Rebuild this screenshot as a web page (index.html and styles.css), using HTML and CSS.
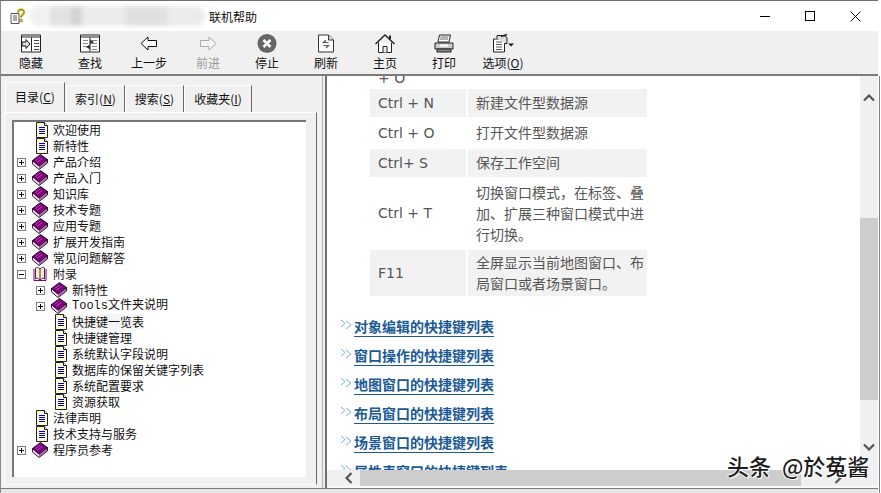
FILE: index.html
```html
<!DOCTYPE html>
<html lang="zh">
<head>
<meta charset="utf-8">
<title>联机帮助</title>
<link rel="stylesheet" href="styles.css">
</head>
<body>
<svg class="defs" width="0" height="0" aria-hidden="true">
  <symbol id="book" viewBox="0 0 16 16">
    <path d="M.5 6.500v3.500l6.500 5.500 8.500-6.500V5.500l-8.500 6.500z" fill="#efe4ef" stroke="#2c102c"/>
    <path d="M.5 6.500 8.500.5l7 5-8.500 6.500z" fill="#800080" stroke="#2c102c"/>
    <path d="M3.500 6.500 8.500 3M5.500 8l5-3.500" stroke="#a848a8"/>
    <path d="M7 12.500v2.500l8-6V6.500z" fill="#800080" opacity=".55"/>
  </symbol>
  <symbol id="doc" viewBox="0 0 12 16">
    <path d="M.5.500h8l3 3v12H.5z" fill="#fffbd8" stroke="#222"/>
    <path d="M8.500.500v3h3" fill="#fff" stroke="#222"/>
    <path d="M3 5.500h6M3 7.500h6M3 9.500h6M3 11.500h6" stroke="#0000c0"/>
  </symbol>
  <symbol id="plus" viewBox="0 0 9 9">
    <rect x=".5" y=".5" width="8" height="8" fill="#fff" stroke="#808080"/>
    <path d="M2 4.500h5M4.500 2v5" stroke="#000"/>
  </symbol>
  <symbol id="minus" viewBox="0 0 9 9">
    <rect x=".5" y=".5" width="8" height="8" fill="#fff" stroke="#808080"/>
    <path d="M2 4.500h5" stroke="#000"/>
  </symbol>
  <symbol id="chev" viewBox="0 0 13 11">
    <path d="M1 1l4 3.500L1 8M6 2l5 4-5 4" fill="none" stroke="#7ab0dc" stroke-width="1"/>
  </symbol>
</svg>

<div class="window">
  <header class="titlebar">
    <svg class="appicon" width="16" height="17" viewBox="0 0 16 17">
      <path d="M1 5.500h8v10H1z" fill="#fff" stroke="#555"/>
      <path d="M3 8h4M3 10h4M3 12h4" stroke="#555"/>
      <path d="M8 4.500c0-4 6-4 6 0 0 2-3 2.500-3 5" fill="none" stroke="#e8d020" stroke-width="2.600"/>
      <path d="M8 4.500c0-4 6-4 6 0 0 2-3 2.500-3 5" fill="none" stroke="#444" stroke-width=".7"/>
      <circle cx="11" cy="12.500" r="1.500" fill="#e8d020" stroke="#444" stroke-width=".5"/>
    </svg>
    <div class="blurred"></div>
    <span class="title">联机帮助</span>
    <div class="controls">
      <svg width="10" height="10" viewBox="0 0 10 10"><path d="M0 5.500h10" stroke="#000"/></svg>
      <svg width="10" height="10" viewBox="0 0 10 10"><rect x=".5" y=".5" width="9" height="9" fill="none" stroke="#000"/></svg>
      <svg width="11" height="11" viewBox="0 0 11 11"><path d="M.5.500l10 10M10.500.500l-10 10" stroke="#000"/></svg>
    </div>
  </header>

  <nav class="toolbar">
    <div class="tool">
      <svg width="22" height="20" viewBox="0 0 22 20"><path d="M1.500 1.500h19v17h-19z" fill="#fff" stroke="#222"/><path d="M1.500 3.500h19M11.500 4v14" stroke="#222"/><path d="M14 7h5M14 10h5M14 13h5M14 16h5" stroke="#444"/><path d="M2 8.500h4V6l4 4.500-4 4.500v-2.500H2z" fill="#ddd" stroke="#111"/></svg>
      <span>隐藏</span>
    </div>
    <div class="tool">
      <svg width="20" height="20" viewBox="0 0 20 20"><path d="M.5 1.500h19v17H.5z" fill="#fff" stroke="#222"/><path d="M.5 3.500h19M10 4v14" stroke="#222"/><path d="M3 7h5M3 10h5M3 13h5M12 7h5M12 10h5M12 13h5M12 16h5" stroke="#888"/><path d="M10 6l4 2.500-4 2.500zM10 11l-4 2.500 4 2.500z" fill="#333"/></svg>
      <span>查找</span>
    </div>
    <div class="tool">
      <svg width="18" height="16" viewBox="0 0 18 16"><path d="M1 8l7-6.500V5h8.500v6H8v3.500z" fill="#fff" stroke="#111"/></svg>
      <span>上一步</span>
    </div>
    <div class="tool off">
      <svg width="18" height="16" viewBox="0 0 18 16"><path d="M17 8l-7-6.500V5H1.500v6H10v3.500z" fill="#f4f4f4" stroke="#aaa"/></svg>
      <span>前进</span>
    </div>
    <div class="tool">
      <svg width="20" height="20" viewBox="0 0 20 20"><circle cx="10" cy="10" r="9.500" fill="#666"/><path d="M6.500 6.500l7 7M13.500 6.500l-7 7" stroke="#fff" stroke-width="2.600"/></svg>
      <span>停止</span>
    </div>
    <div class="tool">
      <svg width="18" height="20" viewBox="0 0 18 20"><path d="M1.500 1.500h10l5 5v12h-15z" fill="#fff" stroke="#333"/><path d="M11.500 1.500v5h5" fill="#ddd" stroke="#333"/><path d="M9 6.500 6.500 9h5M9 14.500 11.500 12h-5" fill="none" stroke="#555" stroke-width="1.200"/></svg>
      <span>刷新</span>
    </div>
    <div class="tool">
      <svg width="20" height="20" viewBox="0 0 20 20"><path d="M.5 10.500 10 1.500l9.500 9" fill="none" stroke="#222" stroke-width="1.400"/><path d="M15 2v4" stroke="#222" stroke-width="2"/><path d="M3.500 9v10h13V9" fill="#fff" stroke="#222"/><path d="M8 19v-6h4v6" fill="#eee" stroke="#222"/></svg>
      <span>主页</span>
    </div>
    <div class="tool">
      <svg width="20" height="20" viewBox="0 0 20 20"><path d="M5.500 1.500h11l-1.500 7H4z" fill="#fff" stroke="#222"/><path d="M6.500 3.500h8M6 5.500h8" stroke="#666"/><path d="M1 9.500h18v6H1z" fill="#ccc" stroke="#222"/><path d="M3 15.500h14v3H3z" fill="#888" stroke="#222"/><path d="M6 12h8" stroke="#fff" stroke-width="2"/></svg>
      <span>打印</span>
    </div>
    <div class="tool">
      <svg width="22" height="20" viewBox="0 0 22 20"><path d="M1.500 5.500h11v13h-11z" fill="#fff" stroke="#222"/><path d="M4 8.500h6M4 11h6M4 13.500h6M4 16h6" stroke="#555"/><path d="M5 5V2h7l3 2v6h-2" fill="#ddd" stroke="#222"/><path d="M9 3l6-2" stroke="#222" stroke-width="1.500"/><path d="M16 10h6l-3 3z" fill="#111"/></svg>
      <span>选项(<u>O</u>)</span>
    </div>
  </nav>

  <main class="main">
    <aside class="side">
      <div class="tabs">
        <div class="tab active">目录(<u>C</u>)</div>
        <div class="tab w1">索引(<u>N</u>)</div>
        <div class="tab w2">搜索(<u>S</u>)</div>
        <div class="tab w3">收藏夹(<u>I</u>)</div>
      </div>
      <div class="pane">
        <div class="tree">
          <div class="row"><i class="slot"></i><svg class="idoc"><use href="#doc"/></svg><span>欢迎使用</span></div>
          <div class="row"><i class="slot"></i><svg class="idoc"><use href="#doc"/></svg><span>新特性</span></div>
          <div class="row"><svg class="exp"><use href="#plus"/></svg><svg class="ibook"><use href="#book"/></svg><span>产品介绍</span></div>
          <div class="row"><svg class="exp"><use href="#plus"/></svg><svg class="ibook"><use href="#book"/></svg><span>产品入门</span></div>
          <div class="row"><svg class="exp"><use href="#plus"/></svg><svg class="ibook"><use href="#book"/></svg><span>知识库</span></div>
          <div class="row"><svg class="exp"><use href="#plus"/></svg><svg class="ibook"><use href="#book"/></svg><span>技术专题</span></div>
          <div class="row"><svg class="exp"><use href="#plus"/></svg><svg class="ibook"><use href="#book"/></svg><span>应用专题</span></div>
          <div class="row"><svg class="exp"><use href="#plus"/></svg><svg class="ibook"><use href="#book"/></svg><span>扩展开发指南</span></div>
          <div class="row"><svg class="exp"><use href="#plus"/></svg><svg class="ibook"><use href="#book"/></svg><span>常见问题解答</span></div>
          <div class="row"><svg class="exp"><use href="#minus"/></svg>
            <svg class="ibook" viewBox="0 0 16 16"><path d="M2 3v11.500h12V3" fill="#fff" stroke="#800080"/><path d="M8 3C6 1 4.500 1 3.500 2v11c1-1 2.500-1 4.500 1 2-2 3.500-2 4.500-1V2c-1-1-2.500-1-4.500 1z" fill="#f4f0c0" stroke="#502060"/><path d="M8 3v11" stroke="#502060"/></svg>
            <span>附录</span></div>
          <div class="row sub"><svg class="exp"><use href="#plus"/></svg><svg class="ibook"><use href="#book"/></svg><span>新特性</span></div>
          <div class="row sub"><svg class="exp"><use href="#plus"/></svg><svg class="ibook"><use href="#book"/></svg><span class="mono">Tools文件夹说明</span></div>
          <div class="row sub"><i class="slot"></i><svg class="idoc"><use href="#doc"/></svg><span class="hover">快捷键一览表</span></div>
          <div class="row sub"><i class="slot"></i><svg class="idoc"><use href="#doc"/></svg><span>快捷键管理</span></div>
          <div class="row sub"><i class="slot"></i><svg class="idoc"><use href="#doc"/></svg><span>系统默认字段说明</span></div>
          <div class="row sub"><i class="slot"></i><svg class="idoc"><use href="#doc"/></svg><span>数据库的保留关键字列表</span></div>
          <div class="row sub"><i class="slot"></i><svg class="idoc"><use href="#doc"/></svg><span>系统配置要求</span></div>
          <div class="row sub"><i class="slot"></i><svg class="idoc"><use href="#doc"/></svg><span>资源获取</span></div>
          <div class="row"><i class="slot"></i><svg class="idoc"><use href="#doc"/></svg><span>法律声明</span></div>
          <div class="row"><i class="slot"></i><svg class="idoc"><use href="#doc"/></svg><span>技术支持与服务</span></div>
          <div class="row"><svg class="exp"><use href="#plus"/></svg><svg class="ibook"><use href="#book"/></svg><span>程序员参考</span></div>
        </div>
      </div>
    </aside>
    <div class="splitter"></div>
    <section class="viewer">
      <div class="doc">
        <div class="clip"><span>+ O</span></div>
        <div class="keys">
          <div class="k shade">Ctrl + N</div><div class="v shade">新建文件型数据源</div>
          <div class="k">Ctrl + O</div><div class="v">打开文件型数据源</div>
          <div class="k shade">Ctrl+ S</div><div class="v shade">保存工作空间</div>
          <div class="k">Ctrl + T</div><div class="v">切换窗口模式，在标签、叠加、扩展三种窗口模式中进行切换。</div>
          <div class="k shade">F11</div><div class="v shade tight">全屏显示当前地图窗口、布局窗口或者场景窗口。</div>
        </div>
        <ul class="links">
          <li><svg class="chev"><use href="#chev"/></svg><a>对象编辑的快捷键列表</a></li>
          <li><svg class="chev"><use href="#chev"/></svg><a>窗口操作的快捷键列表</a></li>
          <li><svg class="chev"><use href="#chev"/></svg><a>地图窗口的快捷键列表</a></li>
          <li><svg class="chev"><use href="#chev"/></svg><a>布局窗口的快捷键列表</a></li>
          <li><svg class="chev"><use href="#chev"/></svg><a>场景窗口的快捷键列表</a></li>
          <li><svg class="chev"><use href="#chev"/></svg><a>属性表窗口的快捷键列表</a></li>
        </ul>
      </div>
      <div class="vbar">
        <svg class="arrow" width="12" height="8" viewBox="0 0 12 8"><path d="M1 6.500l5-5 5 5" fill="none" stroke="#555" stroke-width="2.200"/></svg>
        <div class="vtrack"><div class="vthumb"></div></div>
        <svg class="arrow down" width="12" height="8" viewBox="0 0 12 8"><path d="M1 1.500l5 5 5-5" fill="none" stroke="#555" stroke-width="2.200"/></svg>
      </div>
      <div class="hbar">
        <svg class="arrow" width="8" height="12" viewBox="0 0 8 12"><path d="M6.500 1l-5 5 5 5" fill="none" stroke="#555" stroke-width="2.200"/></svg>
        <div class="hthumb"></div>
        <svg class="arrow" width="8" height="12" viewBox="0 0 8 12"><path d="M1.500 1l5 5-5 5" fill="none" stroke="#555" stroke-width="2.200"/></svg>
      </div>
      <div class="corner"></div>
    </section>
  </main>
  <footer class="foot"></footer>
</div>
<div class="mark">头条 @於菟酱</div>
</body>
</html>
```
FILE: styles.css
```css
* { box-sizing: border-box; }
html, body { margin: 0; height: 100%; overflow: hidden; }
body {
  background: #fff linear-gradient(#808080, #808080) 879px 76px / 1px 417px no-repeat;
  font: 12px "Noto Sans CJK SC", "Liberation Sans", sans-serif;
  color: #111;
}
.defs { position: absolute; }
.window {
  width: 878px;
  height: 493px;
  display: flex;
  flex-direction: column;
  border-top: 1px solid #6e6e6e;
  border-left: 1px solid #8a8a8a;
  background: #f0f0f0;
}
.titlebar {
  height: 30px;
  flex: none;
  display: flex;
  align-items: center;
  background: #fff;
  padding-left: 9px;
}
.appicon { flex: none; margin-top: 1px; }
.blurred {
  width: 177px;
  height: 20px;
  margin-left: 3px;
  border-radius: 10px;
  background: linear-gradient(90deg, #f1f1f1 0 12%, #e2e2e2 12% 24%, #d4d4d4 24% 30%, #ececec 30% 55%, #e0e0e0 55% 78%, #ececec 78% 100%);
  filter: blur(2px);
}
.title { margin-left: 3px; margin-top: 1px; line-height: 16px; }
.controls {
  margin-left: auto;
  display: flex;
  align-items: center;
  gap: 35px;
  padding-right: 17px;
}
.toolbar {
  height: 45px;
  flex: none;
  display: flex;
  padding-left: 0.500px;
  border-bottom: 2px solid #7c7c7c;
}
.tool {
  width: 59px;
  height: 43px;
  display: flex;
  flex-direction: column;
  align-items: center;
}
.tool svg { height: 23px; margin-top: 1px; flex: none; }
.tool span { line-height: 16px; margin-top: 0; }
.off { color: #9a9a9a; }
.main { flex: 1; min-height: 0; display: flex; }
.side { width: 316px; flex: none; padding: 7px 0 3px 2px; display: flex; flex-direction: column; }
.tabs { height: 29px; flex: none; display: flex; align-items: flex-end; }
.tab {
  width: 60px;
  height: 27px;
  line-height: 26px;
  text-align: center;
  border-right: 1px solid #6a6a6a;
  border-left: 1px solid #fff;
  border-top: 1px solid #fff;
}
.tab.active { height: 30px; line-height: 28px; margin-right: 1px; margin-left: 2px; }
.w1 { width: 59px; }
.w2 { width: 59px; }
.w3 { width: 68px; }
.pane {
  flex: 1;
  min-height: 0;
  padding: 7px 10px 7px 7px;
  margin-left: 1px;
  border-top: 1px solid #fff;
  border-left: 1px solid #fff;
  border-right: 1px solid #6a6a6a;
  border-bottom: 1px solid #fafafa;
}
.tree {
  height: 100%;
  background: #fff;
  border-top: 2px solid #777;
  border-left: 2px solid #777;
  overflow: hidden;
}
.row { height: 16px; display: flex; align-items: center; padding-left: 3px; white-space: nowrap; line-height: 16px; }
.row.sub { padding-left: 22px; }
.slot { width: 15px; flex: none; }
.exp { width: 9px; height: 9px; margin-right: 6px; flex: none; }
.ibook { width: 16px; height: 16px; margin-right: 5px; flex: none; }
.idoc { width: 12px; height: 16px; margin: 0 5px 0 4px; flex: none; }
.mono { font-family: "Liberation Mono", "Noto Sans CJK SC", monospace; }
.hover { background: #f6f6f6; }
.splitter { width: 8px; flex: none; }
.splitter::before { content: ""; display: block; width: 1px; height: 100%; margin-left: 5px; background: #b4b4b4; }
.viewer {
  flex: 1;
  min-width: 0;
  display: grid;
  grid-template-columns: 1fr 18px;
  grid-template-rows: 1fr 18px;
  border-left: 2px solid #707070;
  background: #fff;
  overflow: hidden;
}
.doc {
  overflow: hidden;
  padding-left: 43px;
  color: #555;
  font: 14px/21px "DejaVu Sans", "Noto Sans CJK SC", sans-serif;
}
.clip { height: 13px; overflow: hidden; display: flex; align-items: flex-end; padding-left: 8px; }
.clip span { flex: none; height: 21px; }
.keys { width: 277px; display: grid; grid-template-columns: 96px 179px; gap: 2px; }
.k, .v { padding: 0 8px; display: flex; align-items: center; min-height: 28px; }
.k { padding-right: 0; }
.v { display: block; padding: 3px 0 3px 8px; font-family: "Noto Sans CJK SC", sans-serif; }
.v.tight { padding: 2px 0 2px 8px; }
.shade { background: #f2f2f2; }
.links { list-style: none; margin: 18px 0 0 -30px; padding: 0; }
.links li { height: 29px; display: flex; align-items: flex-start; }
.chev { width: 13px; height: 11px; margin: 5px 1px 0 0; flex: none; }
.links a {
  font: bold 14px/19px "Noto Sans CJK SC", sans-serif;
  color: #1b5a94;
  border-bottom: 1px solid #1b5a94;
  margin-top: 3px;
  height: 20px;
}
.vbar { background: #f0f0f0; display: flex; flex-direction: column; align-items: center; }
.vtrack { flex: 1; width: 100%; padding-top: 112px; }
.vthumb { height: 182px; background: #cdcdcd; }
.arrow { flex: none; margin: 18px 0 4px; }
.arrow.down { margin: 4px 0 19px; }
.hbar { background: #f0f0f0; display: flex; align-items: center; padding: 0 0 0 18px; border-bottom: 2px solid #fafafa; }
.hbar .arrow { margin: 0; }
.hthumb { width: 441px; height: 100%; margin: 0 33px 0 7px; background: #cdcdcd; }
.corner { background: #f0f0f0; border-bottom: 2px solid #fafafa; }
.foot { height: 5px; flex: none; border-top: 1px solid #7c7c7c; background: #e6e6e6; }
.mark {
  position: absolute;
  left: 727px;
  top: 451px;
  font: 500 22px/28px "Noto Sans CJK SC", sans-serif;
  word-spacing: 6px;
  color: #1c1c1c;
  white-space: nowrap;
  text-shadow: 1px 1px 0 #fff, -1px 0 0 #fff, 0 -1px 0 #fff, 1px 0 0 #fff;
}
```
